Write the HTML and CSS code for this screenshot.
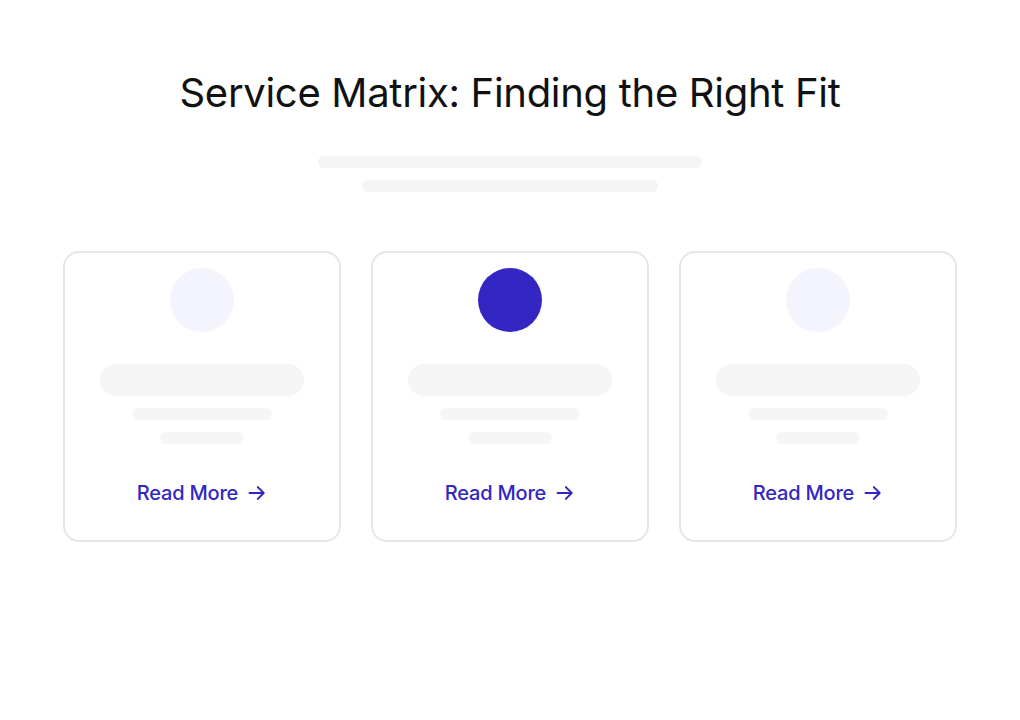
FILE: index.html
```html
<!DOCTYPE html>
<html lang="en">
<head>
  <meta charset="UTF-8" />
  <meta name="viewport" content="width=device-width, initial-scale=1.0"/>
  <title>Service Matrix</title>
  <link rel="stylesheet" href="styles.css">
</head>
<body>
  <div class="container">
    <h1>Service Matrix: Finding the Right Fit</h1>
    <div class="intro">
      <div class="line line-long"></div>
      <div class="line line-short"></div>
    </div>

    <div class="cards">
      <div class="card">
        <div class="icon"></div>
        <div class="bar bar-title"></div>
        <div class="bar bar-mid"></div>
        <div class="bar bar-small"></div>
        <a class="more" href="#">Read More
          <svg width="20" height="20" viewBox="0 0 24 24" fill="none" stroke="currentColor" stroke-width="2.4" stroke-linecap="round" stroke-linejoin="round"><path d="M3 12h17M13 5l7 7-7 7"/></svg>
        </a>
      </div>
      <div class="card">
        <div class="icon active"></div>
        <div class="bar bar-title"></div>
        <div class="bar bar-mid"></div>
        <div class="bar bar-small"></div>
        <a class="more" href="#">Read More
          <svg width="20" height="20" viewBox="0 0 24 24" fill="none" stroke="currentColor" stroke-width="2.4" stroke-linecap="round" stroke-linejoin="round"><path d="M3 12h17M13 5l7 7-7 7"/></svg>
        </a>
      </div>
      <div class="card">
        <div class="icon"></div>
        <div class="bar bar-title"></div>
        <div class="bar bar-mid"></div>
        <div class="bar bar-small"></div>
        <a class="more" href="#">Read More
          <svg width="20" height="20" viewBox="0 0 24 24" fill="none" stroke="currentColor" stroke-width="2.4" stroke-linecap="round" stroke-linejoin="round"><path d="M3 12h17M13 5l7 7-7 7"/></svg>
        </a>
      </div>
    </div>
  </div>
</body>
</html>
```

FILE: styles.css
```css
body {
  font-family: Inter, "Noto Sans", sans-serif;
  background: #fff;
  color: #111;
  margin: 0;
  padding: 0;
}
.container {
  padding: 70px 62px 0;
  display: flex;
  flex-direction: column;
  align-items: center;
}
h1 {
  margin: 0;
  font-size: 40px;
  font-weight: 400;
  line-height: 46px;
  letter-spacing: -0.3px;
}
.intro {
  margin-top: 40px;
  display: flex;
  flex-direction: column;
  align-items: center;
  gap: 12px;
}
.line {
  height: 12px;
  border-radius: 6px;
  background: #f5f5f5;
}
.line-long {
  width: 384px;
}
.line-short {
  width: 296px;
}
.cards {
  margin-top: 59px;
  display: flex;
  gap: 30px;
}
.card {
  width: 278px;
  height: 291px;
  box-sizing: border-box;
  border: 2px solid #e6e6e6;
  border-radius: 16px;
  padding-top: 15px;
  display: flex;
  flex-direction: column;
  align-items: center;
}
.icon {
  width: 64px;
  height: 64px;
  border-radius: 50%;
  background: #f4f4fe;
}
.icon.active {
  background: #3426c2;
}
.bar {
  border-radius: 16px;
  background: #f5f5f5;
}
.bar-title {
  width: 204px;
  height: 32px;
  margin-top: 32px;
}
.bar-mid {
  width: 140px;
  height: 12px;
  margin-top: 12px;
}
.bar-small {
  width: 84px;
  height: 12px;
  margin-top: 12px;
}
.more {
  margin-top: 37px;
  display: flex;
  align-items: center;
  gap: 9px;
  color: #3426c2;
  font-size: 20px;
  font-weight: 500;
  text-decoration: none;
  letter-spacing: -0.2px;
}
```
